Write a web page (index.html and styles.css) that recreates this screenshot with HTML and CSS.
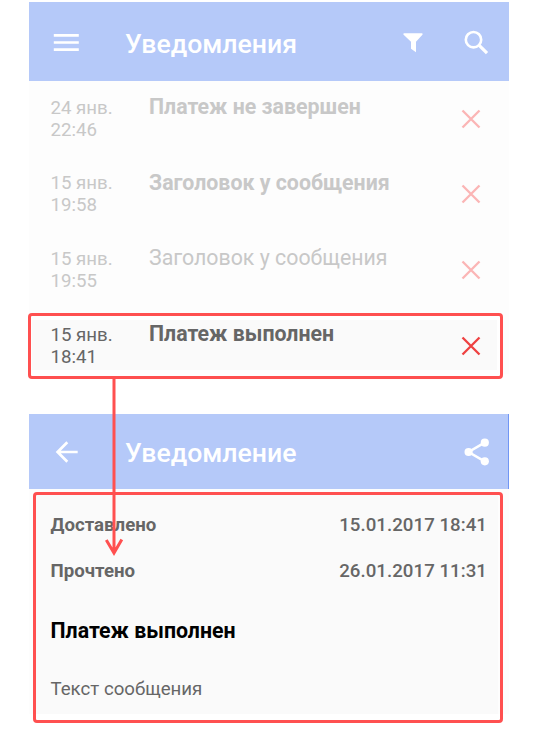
FILE: index.html
```html
<!DOCTYPE html>
<html lang="ru">
<head>
<meta charset="utf-8">
<title>Уведомления</title>
<link rel="stylesheet" href="styles.css">
</head>
<body>
<main class="page">
  <section class="screen list-screen">
    <header class="bar">
      <svg class="icon" viewBox="0 0 32 32"><path d="M3.8 9.3h25M3.8 16.5h25M3.8 23.7h25" fill="none" stroke="#fff" stroke-width="2.7"/></svg>
      <h1 class="bar-title">Уведомления</h1>
      <svg class="icon filter" viewBox="0 0 32 32"><path d="M7.2 7.2h17.6c1 0 1.1.8.6 1.5L19 15.8v10.4l-5-3.4v-7L6.6 8.7c-.5-.7-.4-1.5.6-1.5z" fill="#fff"/></svg>
      <svg class="icon" viewBox="0 0 32 32"><circle cx="13.5" cy="13.7" r="7.7" fill="none" stroke="#fff" stroke-width="2.6"/><path d="M19.2 19.4l7.8 7.8" stroke="#fff" stroke-width="3.2"/></svg>
    </header>
    <ul class="list">
      <li class="row"><time class="time">24 янв.<br>22:46</time><span class="title unread">Платеж не завершен</span><svg class="cross" viewBox="0 0 20 20"><path d="M1.5 1.5l17 17M18.5 1.5l-17 17"/></svg></li>
      <li class="row"><time class="time">15 янв.<br>19:58</time><span class="title unread">Заголовок у сообщения</span><svg class="cross" viewBox="0 0 20 20"><path d="M1.5 1.5l17 17M18.5 1.5l-17 17"/></svg></li>
      <li class="row"><time class="time">15 янв.<br>19:55</time><span class="title">Заголовок у сообщения</span><svg class="cross" viewBox="0 0 20 20"><path d="M1.5 1.5l17 17M18.5 1.5l-17 17"/></svg></li>
      <li class="row active"><time class="time">15 янв.<br>18:41</time><span class="title unread">Платеж выполнен</span><svg class="cross" viewBox="0 0 20 20"><path d="M1.5 1.5l17 17M18.5 1.5l-17 17"/></svg></li>
    </ul>
  </section>
  <section class="screen detail-screen">
    <header class="bar detail-bar">
      <svg class="icon" viewBox="0 0 32 32"><path d="M27.7 16H8.1M17.3 6.3L7.6 16l9.7 9.7" fill="none" stroke="#fff" stroke-width="2.7"/></svg>
      <h2 class="bar-title">Уведомление</h2>
      <svg class="icon" viewBox="0 0 32 32"><path d="M24.6 6.7L8.6 16l16 9.3" fill="none" stroke="#fff" stroke-width="2.5"/><circle cx="24.8" cy="6.7" r="4.1" fill="#fff"/><circle cx="8.6" cy="16" r="4.1" fill="#fff"/><circle cx="24.8" cy="25.3" r="4.1" fill="#fff"/></svg>
    </header>
    <div class="detail">
      <dl class="facts">
        <dt>Доставлено</dt><dd>15.01.2017 18:41</dd>
        <dt>Прочтено</dt><dd>26.01.2017 11:31</dd>
      </dl>
      <h3 class="subject">Платеж выполнен</h3>
      <p class="message">Текст сообщения</p>
    </div>
    <div class="detail-frame"></div>
  </section>
  <svg class="arrow" viewBox="0 0 20 180"><path d="M10 0v177M2.3 164L10 177l7.8-13.5"/></svg>
</main>
</body>
</html>
```
FILE: styles.css
```css
*, *::before { box-sizing: border-box; }
body { margin: 0; background: #fff; font-family: Roboto, "Liberation Sans", sans-serif; }
h1, h2, h3, p, ul, dl, dd { margin: 0; padding: 0; }
svg { display: block; flex: none; }
.page { position: relative; height: 731px; padding: 2px 31px 0 29px; overflow: hidden; }
.screen { position: relative; }
.list-screen { height: 372px; background: #fdfdfd; }
.bar { display: flex; align-items: center; height: 78.5px; padding: 1px 17px 0 21px; background: #b5c9f9; color: #fff; }
.icon { width: 32px; height: 32px; }
.filter { margin-right: 31px; }
.bar-title { flex: 1; margin-left: 43px; font-size: 26.67px; line-height: 32px; font-weight: 500; letter-spacing: -0.02px; padding-top: 5px; }
.list { list-style: none; }
.row { position: relative; display: grid; grid-template-columns: 98.5px 1fr 20px; height: 75.7px; padding: 16px 28px 0 21.5px; color: #c8c8c8; }
.time { font-size: 18.67px; line-height: 22px; }
.title { font-size: 21.33px; line-height: 25px; margin-top: -2.4px; }
.unread { font-weight: 700; }
.cross { width: 20px; height: 20px; margin-top: 12px; fill: none; stroke: #fbb5b5; stroke-width: 2.3; }
.active { color: #666; }
.active > * { position: relative; }
.active .cross { stroke: #ee4141; }
.active::before { content: ""; position: absolute; left: -1px; top: 5.4px; width: 475px; height: 66px; border: 3px solid #ff5050; border-radius: 4px; background: linear-gradient(#fafafa, #fafafa) 1px 4px / 465px 50px no-repeat #fff; }
.detail-screen { margin-top: 40px; }
.detail-bar { height: 75px; padding-top: 0; border-right: 1px solid #7196f5; padding-right: 16px; }
.detail-bar .bar-title { padding-top: 3px; }
.detail { height: 225px; padding: 24.5px 22px 0 21.5px; background: linear-gradient(#fafafa, #fafafa) 6px 6px / 463px 219px no-repeat #fdfdfd; color: #666; }
.facts { display: grid; grid-template-columns: 1fr auto; row-gap: 24.5px; font-size: 18.67px; line-height: 22px; font-weight: 700; }
.facts dd { font-weight: 500; letter-spacing: 0.04px; }
.subject { margin-top: 35.5px; font-size: 21.33px; line-height: 25px; color: #000; }
.message { margin-top: 35px; font-size: 18.67px; line-height: 22px; }
.detail-frame { position: absolute; left: 4px; top: 77.5px; width: 470px; height: 231.5px; border: 3px solid #ff5050; border-radius: 4px; }
.arrow { position: absolute; left: 104px; top: 376px; width: 20px; height: 180px; fill: none; stroke: #ff5050; stroke-width: 3; }
```
